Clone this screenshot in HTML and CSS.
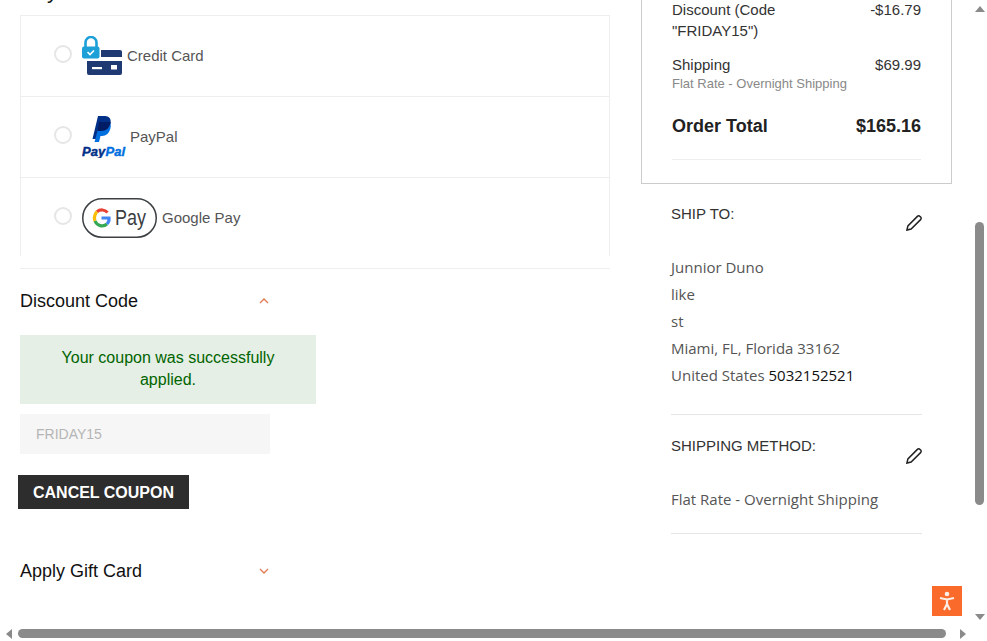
FILE: index.html
```html
<!DOCTYPE html>
<html lang="en">

<head>
    <meta charset="UTF-8">
    <meta name="viewport" content="width=device-width, initial-scale=1.0">
    <title>Checkout</title>
    <link rel="stylesheet" href="styles.css">
</head>

<body>
    <div class="screen">
        <div class="viewport">
            <div class="page">
                <div class="left">
                    <h2 class="pay-title">Payment Method</h2>
                    <div class="pay-list">
                        <div class="pay-row">
                            <span class="radio"></span>
                            <svg class="pay-icon" width="40" height="40" viewBox="0 0 40 40">
                                <path d="M19 14h19a2 2 0 0 1 2 2v5H19z" fill="#1f3a72" />
                                <path d="M5 25h35v12a2 2 0 0 1-2 2H7a2 2 0 0 1-2-2z" fill="#1f3a72" />
                                <rect x="10" y="31" width="10" height="2.2" fill="#fff" />
                                <rect x="29" y="29" width="6" height="4.5" fill="#fff" />
                                <path d="M3.5 11.500V6.500a5.500 5.500 0 0 1 11 0v5" fill="none" stroke="#1d9fd8" stroke-width="2.6" />
                                <rect x="0" y="10.5" width="17.5" height="12" rx="2" fill="#1d9fd8" />
                                <path d="M5.5 16l2.5 2.5 4-4" fill="none" stroke="#fff" stroke-width="1.6" />
                            </svg>
                            <span class="pay-label">Credit Card</span>
                        </div>
                        <div class="pay-row">
                            <span class="radio"></span>
                            <svg class="pay-icon pp-icon" width="44" height="42" viewBox="0 0 44 42">
                                <path d="M16 0H23C27 0 29.500 3 28.500 7C27.500 12 24 15 19.500 15H17L15.500 23H10.500Z" fill="#003087" />
                                <path d="M18 6H27.500C29 8 29 10 28.500 12C27.500 17 24 20 20 20H18.500L17 26H12.500Z" fill="#0070e0" />
                                <path d="M17 6H28.500C28.800 6.500 28.800 6.500 28.500 7C27.500 12 24 15 19.500 15H15.500Z" fill="#001c64" />
                                <text class="pp-word pp-dark" x="0" y="40">Pay</text>
                                <text class="pp-word pp-light" x="23.500" y="40">Pal</text>
                            </svg>
                            <span class="pay-label">PayPal</span>
                        </div>
                        <div class="pay-row pay-row-last">
                            <span class="radio"></span>
                            <svg class="pay-icon" width="75" height="40" viewBox="0 0 75 40">
                                <rect x="0.750" y="0.750" width="73.500" height="38.500" rx="19.250" fill="#fff" stroke="#3c4043" stroke-width="1.500" />
                                <g fill="none" stroke-width="3.200">
                                    <path d="M25.500 14.500a7.600 7.600 0 0 0-10.500-.8" stroke="#ea4335" />
                                    <path d="M15 13.700a7.600 7.600 0 0 0-2 3.300 7.600 7.600 0 0 0 0 6" stroke="#fbbc04" />
                                    <path d="M13 23a7.600 7.600 0 0 0 12 3" stroke="#34a853" />
                                    <path d="M25 26a7.600 7.600 0 0 0 2-6h-7.500" stroke="#4285f4" />
                                </g>
                                <text class="gp-word" x="33" y="27" textLength="31" lengthAdjust="spacingAndGlyphs">Pay</text>
                            </svg>
                            <span class="pay-label">Google Pay</span>
                        </div>
                    </div>

                    <div class="coupon">
                        <div class="acc-head">
                            <span>Discount Code</span>
                            <svg width="12" height="8" viewBox="0 0 12 8">
                                <path d="M2 6l4-4 4 4" fill="none" stroke="#e07a50" stroke-width="1.300" />
                            </svg>
                        </div>
                        <div class="msg">Your coupon was successfully applied.</div>
                        <input class="coupon-input" type="text" value="FRIDAY15" disabled>
                        <button class="cancel-btn" type="button">CANCEL COUPON</button>
                        <div class="acc-head acc-gift">
                            <span>Apply Gift Card</span>
                            <svg width="12" height="8" viewBox="0 0 12 8">
                                <path d="M2 2l4 4 4-4" fill="none" stroke="#e07a50" stroke-width="1.300" />
                            </svg>
                        </div>
                    </div>
                </div>

                <div class="right">
                    <div class="summary">
                        <div class="sum-row">
                            <span class="sum-name">Discount (Code "FRIDAY15")</span>
                            <span>-$16.79</span>
                        </div>
                        <div class="sum-row sum-ship">
                            <span>Shipping</span>
                            <span>$69.99</span>
                        </div>
                        <div class="sum-sub">Flat Rate - Overnight Shipping</div>
                        <div class="sum-row sum-total">
                            <span>Order Total</span>
                            <span>$165.16</span>
                        </div>
                    </div>

                    <div class="info">
                        <div class="info-head">
                            <span>SHIP TO:</span>
                            <svg class="pencil" width="16" height="16" viewBox="0 0 16 16">
                                <path d="M.9 15.100l1-4.200L11.400 1.400a1.800 1.800 0 0 1 2.600 0l.6.6a1.800 1.800 0 0 1 0 2.600L5.100 14.100z" fill="none" stroke="#222" stroke-width="1.500" />
                            </svg>
                        </div>
                        <div class="info-text">
                            Junnior Duno<br>
                            like<br>
                            st<br>
                            Miami, FL, Florida 33162<br>
                            United States <span class="phone">5032152521</span>
                        </div>
                    </div>

                    <div class="info info-method">
                        <div class="info-head">
                            <span>SHIPPING METHOD:</span>
                            <svg class="pencil" width="16" height="16" viewBox="0 0 16 16">
                                <path d="M.9 15.100l1-4.200L11.400 1.400a1.800 1.800 0 0 1 2.600 0l.6.6a1.800 1.800 0 0 1 0 2.600L5.100 14.100z" fill="none" stroke="#222" stroke-width="1.500" />
                            </svg>
                        </div>
                        <div class="info-text">Flat Rate - Overnight Shipping</div>
                    </div>
                </div>
            </div>

            <!-- floating accessibility button -->
            <div class="a11y-btn">
                <svg width="22" height="24" viewBox="0 0 22 24">
                    <circle cx="11" cy="5" r="2.300" fill="#fdeee5" />
                    <path d="M4 9l7 1.500L18 9M11 10.500v4.500M11 15l-3 6M11 15l3 6" fill="none" stroke="#fdeee5" stroke-width="2.200" />
                </svg>
            </div>
        </div>

        <div class="vbar">
            <span class="arrow arrow-up"></span>
            <span class="vthumb"></span>
            <span class="arrow arrow-down"></span>
        </div>
        <div class="hbar">
            <span class="arrow arrow-left"></span>
            <span class="hthumb"></span>
            <span class="arrow arrow-right"></span>
        </div>
    </div>
</body>

</html>
```

FILE: styles.css
```css
* {
    margin: 0;
    padding: 0;
    box-sizing: border-box;
}

body {
    font-family: "Liberation Sans", Arial, sans-serif;
    background: #fff;
    overflow: hidden;
}

/* window: page + two scrollbars */
.screen {
    display: grid;
    grid-template-columns: 972px 15px;
    grid-template-rows: 626px 15px;
    width: 987px;
    height: 641px;
}

.viewport {
    position: relative;
    overflow: hidden;
}

.page {
    display: flex;
    padding-left: 20px;
}

.left {
    width: 590px;
    margin-right: 31px;
}

.pay-title {
    height: 30px;
    margin-top: -24px;
    margin-bottom: 9px;
    font-size: 22px;
    font-weight: 400;
    line-height: 30px;
    color: #111;
}

/* payment methods */
.pay-list {
    border: 1px solid #eee;
    border-bottom: 0;
}

.pay-row {
    display: flex;
    align-items: center;
    height: 81px;
    padding-left: 33px;
    border-bottom: 1px solid #eee;
}

.pay-row-last {
    height: 78px;
    padding-top: 2px;
    border-bottom: 0;
}

.radio {
    width: 18px;
    height: 18px;
    margin-right: 10px;
    margin-bottom: 5px;
    border: 2px solid #e6e6e6;
    border-radius: 50%;
}

.pay-icon {
    flex: none;
}

.pp-icon {
    margin-right: -1px;
}

.pay-label {
    margin-left: 5px;
    margin-bottom: 2px;
    font-size: 15px;
    color: #555;
}

.pp-word {
    font-family: "Liberation Sans", sans-serif;
    font-size: 13px;
    font-weight: 700;
    font-style: italic;
    stroke-width: 0.4px;
}

.pp-dark {
    fill: #003087;
    stroke: #003087;
}

.pp-light {
    fill: #0070e0;
    stroke: #0070e0;
}

.gp-word {
    font-family: "Liberation Sans", sans-serif;
    font-size: 22px;
    fill: #3c4043;
}

/* coupon */
.coupon {
    margin-top: 12px;
    border-top: 1px solid #eee;
}

.acc-head {
    display: flex;
    align-items: center;
    justify-content: space-between;
    width: 250px;
    height: 24px;
    margin-top: 20px;
    font-size: 18px;
    color: #111;
}

.msg {
    width: 296px;
    height: 69px;
    margin-top: 22px;
    padding: 12px 30px 0;
    background: #e5efe5;
    color: #006400;
    font-size: 16px;
    line-height: 22px;
    text-align: center;
}

.coupon-input {
    display: block;
    width: 250px;
    height: 40px;
    margin-top: 10px;
    padding-left: 16px;
    border: 0;
    background: #f6f6f6;
    color: #b5b5b5;
    font-family: "Liberation Sans", Arial, sans-serif;
    font-size: 14px;
}

.cancel-btn {
    display: block;
    width: 171px;
    height: 34px;
    margin-top: 21px;
    margin-left: -2px;
    padding-top: 1px;
    border: 0;
    background: #2d2d2d;
    color: #fff;
    font-family: "Liberation Sans", Arial, sans-serif;
    font-size: 16px;
    font-weight: 700;
}

.acc-gift {
    margin-top: 50px;
}

/* right column */
.right {
    width: 311px;
}

.summary {
    margin-top: -32px;
    padding: 30px 30px 23px;
    border: 1px solid #ccc;
    font-size: 15px;
    line-height: 21px;
    color: #333;
}

.sum-row {
    display: flex;
    justify-content: space-between;
}

.sum-name {
    width: 150px;
}

.sum-ship {
    margin-top: 13px;
}

.sum-sub {
    font-size: 13px;
    line-height: 17px;
    color: #888;
}

.sum-total {
    padding: 22px 0 21px;
    border-bottom: 1px solid #eee;
    font-size: 18px;
    font-weight: 700;
    line-height: 24px;
    color: #222;
}

.info {
    width: 251px;
    margin-left: 30px;
    padding: 19px 0 25px;
    border-bottom: 1px solid #e6e6e6;
}

.info-head {
    display: flex;
    justify-content: space-between;
    height: 27px;
    font-size: 15px;
    line-height: 21px;
    color: #333;
}

.pencil {
    margin-top: 12px;
}

.info-text {
    margin-top: 24px;
    font-family: "Open Sans", sans-serif;
    font-size: 15px;
    line-height: 27px;
    color: #555;
}

.phone {
    color: #111;
}

.info-method {
    padding: 20px 0 20px;
}

.info-method .pencil {
    margin-top: 13px;
}

.a11y-btn {
    position: absolute;
    left: 932px;
    top: 586px;
    display: flex;
    align-items: center;
    justify-content: center;
    width: 30px;
    height: 30px;
    background: #f96a2b;
}

/* scrollbars */
.vbar {
    display: flex;
    flex-direction: column;
    align-items: center;
    grid-row: 1;
    grid-column: 2;
    padding: 6px 0 6px;
    background: #fff;
}

.vthumb {
    width: 9px;
    height: 283px;
    margin-top: 210px;
    border-radius: 5px;
    background: #8a8a8a;
}

.hbar {
    display: flex;
    align-items: center;
    grid-row: 2;
    grid-column: 1;
    padding: 0 6px;
    background: #fff;
}

.hthumb {
    width: 928px;
    height: 9px;
    margin-left: 6px;
    border-radius: 5px;
    background: #8a8a8a;
}

.arrow {
    width: 0;
    height: 0;
    border-style: solid;
    border-color: transparent;
}

.arrow-up {
    border-width: 0 5px 6px;
    border-bottom-color: #8a8a8a;
}

.arrow-down {
    margin-top: auto;
    border-width: 6px 5px 0;
    border-top-color: #8a8a8a;
}

.arrow-left {
    border-width: 5px 6px 5px 0;
    border-right-color: #8a8a8a;
}

.arrow-right {
    margin-left: auto;
    border-width: 5px 0 5px 6px;
    border-left-color: #8a8a8a;
}
```
